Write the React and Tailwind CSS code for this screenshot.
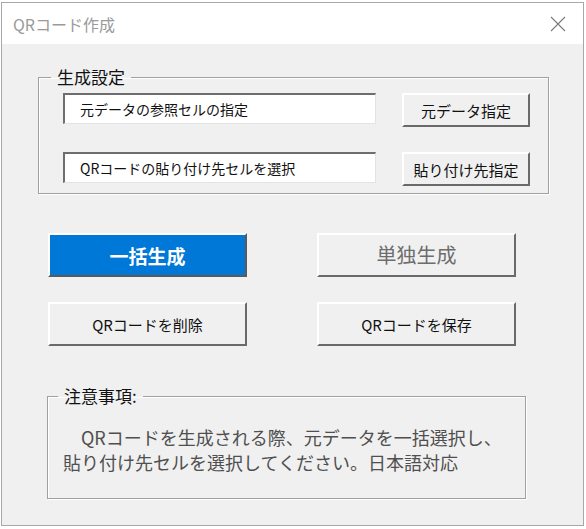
import React from "react";

const FONT = { fontFamily: '"Noto Sans CJK JP", "Noto Sans", sans-serif' };

function TextBox({ children }) {
  return (
    <div className="w-[313px] h-[31px] bg-white border-t-2 border-l-2 border-t-[#6e6e6e] border-l-[#6e6e6e] border-r border-b border-r-[#e3e3e3] border-b-[#e3e3e3] flex items-center pl-[15px] text-[14px] text-[#111] leading-none whitespace-nowrap">
      {children}
    </div>
  );
}

function SmallButton({ children }) {
  return (
    <div className="w-[128px] h-[34px] bg-[#f0f0f0] border-2 border-t-white border-l-white border-r-[#6a6a6a] border-b-[#6a6a6a] flex items-center justify-center text-[15px] text-[#111] leading-none whitespace-nowrap">
      {children}
    </div>
  );
}

function BigButton({ children, variant }) {
  if (variant === "blue") {
    return (
      <div className="w-[199px] h-[44px] bg-[#0078d7] border-2 border-t-white border-l-white border-r-[#5a5a5a] border-b-[#5a5a5a] flex items-center justify-center text-[19px] font-bold text-white leading-none whitespace-nowrap">
        {children}
      </div>
    );
  }
  if (variant === "disabled") {
    return (
      <div className="w-[199px] h-[44px] bg-[#f0f0f0] border-2 border-t-white border-l-white border-r-[#6a6a6a] border-b-[#6a6a6a] flex items-center justify-center text-[20px] text-[#6d6d6d] leading-none whitespace-nowrap">
        {children}
      </div>
    );
  }
  return (
    <div className="w-[199px] h-[44px] bg-[#f0f0f0] border-2 border-t-white border-l-white border-r-[#6a6a6a] border-b-[#6a6a6a] flex items-center justify-center text-[15px] text-[#111] leading-none whitespace-nowrap">
      {children}
    </div>
  );
}

export default function App() {
  return (
    <div className="w-[586px] h-[529px] bg-white pt-[2px] pl-[1px] overflow-hidden" style={FONT}>
      <div className="w-[583px] h-[524px] border border-[#a8a8a8] flex flex-col">
        {/* Title bar */}
        <div className="h-[41px] bg-white flex items-center justify-between pl-[11px] pr-[16px] shrink-0">
          <span className="text-[16px] text-[#9a9a9a] leading-none">QRコード作成</span>
          <svg width="16" height="16" viewBox="0 0 16 16" className="mr-[1px]">
            <path d="M1 1 L15 15 M15 1 L1 15" stroke="#7a7a7a" strokeWidth="1.1" fill="none" />
          </svg>
        </div>
        {/* Body */}
        <div className="flex-1 bg-[#f0f0f0] flex flex-col">
          <fieldset className="ml-[36px] mt-[21px] w-[511px] h-[129px] border border-[#a0a0a0] shadow-[inset_1px_1px_0_#ffffff,1px_1px_0_#ffffff]">
            <legend className="ml-[12px] px-[6px] text-[17px] leading-[24px] text-[#111]">生成設定</legend>
            <div className="flex flex-col gap-[25px] mt-[4px]">
              <div className="flex items-start h-[34px]">
                <div className="ml-[24px]">
                  <TextBox>元データの参照セルの指定</TextBox>
                </div>
                <div className="ml-[26px]">
                  <SmallButton>元データ指定</SmallButton>
                </div>
              </div>
              <div className="flex items-start h-[34px]">
                <div className="ml-[24px]">
                  <TextBox>QRコードの貼り付け先セルを選択</TextBox>
                </div>
                <div className="ml-[26px]">
                  <SmallButton>貼り付け先指定</SmallButton>
                </div>
              </div>
            </div>
          </fieldset>

          <div className="ml-[46px] mt-[39px] grid grid-cols-[199px_199px] gap-x-[70px] gap-y-[25px]">
            <BigButton variant="blue">一括生成</BigButton>
            <BigButton variant="disabled">単独生成</BigButton>
            <BigButton>QRコードを削除</BigButton>
            <BigButton>QRコードを保存</BigButton>
          </div>

          <fieldset className="ml-[45px] mt-[38px] w-[479px] h-[115px] border border-[#a0a0a0] shadow-[inset_1px_1px_0_#ffffff,1px_1px_0_#ffffff]">
            <legend className="ml-[10px] px-[6px] text-[17px] leading-[24px] text-[#111]">注意事項:</legend>
            <div className="mt-[17px] pl-[15px] text-[18px] leading-[25px] text-[#4f4f4f] whitespace-nowrap">
              <div>　QRコードを生成される際、元データを一括選択し、</div>
              <div>貼り付け先セルを選択してください。日本語対応</div>
            </div>
          </fieldset>
        </div>
      </div>
    </div>
  );
}
